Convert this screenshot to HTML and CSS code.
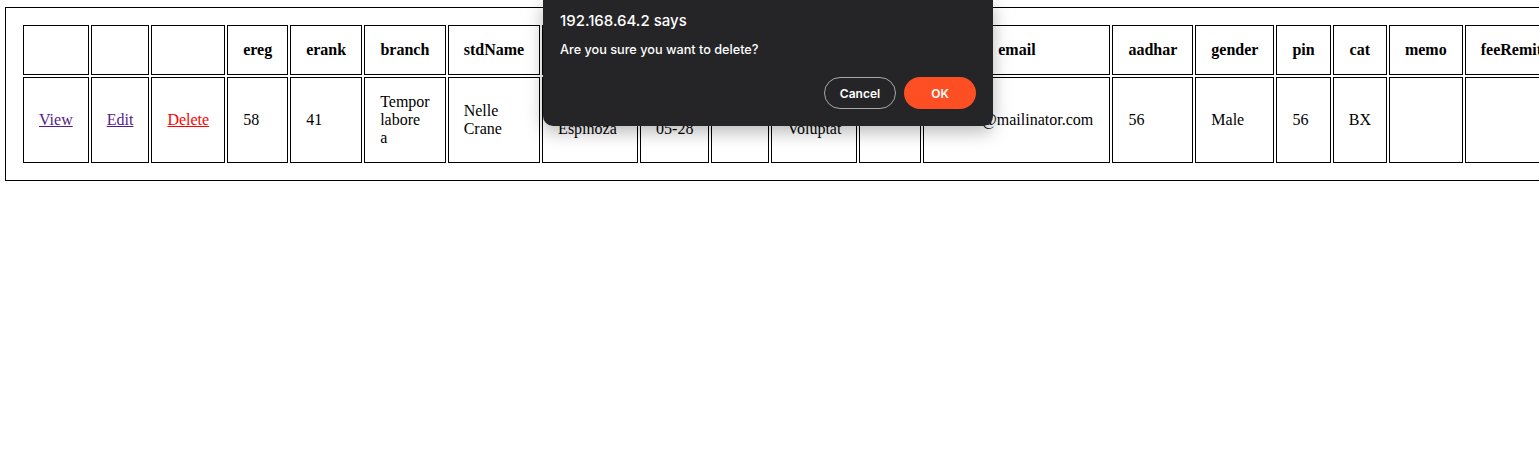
FILE: index.html
```html
<!DOCTYPE html>
<html>
<head>
<meta charset="utf-8">
<title>Students</title>
<link rel="stylesheet" href="styles.css">
</head>
<body>
<div class="wrap">
  <table class="grid">
    <thead>
      <tr>
        <th></th><th></th><th></th>
        <th>ereg</th><th>erank</th><th>branch</th><th>stdName</th>
        <th><div class="col col-lname">lastName</div></th>
        <th><div class="col col-date">date</div></th>
        <th><div class="col col-dob">dob</div></th>
        <th><div class="col col-addr">address</div></th>
        <th><div class="col col-mob">mob</div></th>
        <th><div class="col col-email">email</div></th>
        <th>aadhar</th><th>gender</th><th>pin</th><th>cat</th><th>memo</th><th>feeRemitted</th>
      </tr>
    </thead>
    <tbody>
      <tr>
        <td><a class="visited" href="#">View</a></td>
        <td><a class="visited" href="#">Edit</a></td>
        <td><a class="danger" href="#">Delete</a></td>
        <td>58</td>
        <td>41</td>
        <td>Tempor labore a</td>
        <td>Nelle Crane</td>
        <td>Rhona Espinoza</td>
        <td>1997-<br>05-28</td>
        <td></td>
        <td>Nisi Voluptat</td>
        <td></td>
        <td>haxem@mailinator.com</td>
        <td>56</td>
        <td>Male</td>
        <td>56</td>
        <td>BX</td>
        <td></td>
        <td></td>
      </tr>
    </tbody>
  </table>
</div>

<div class="dialog">
  <div class="dialog-title">192.168.64.2 says</div>
  <div class="dialog-msg">Are you sure you want to delete?</div>
  <div class="dialog-actions">
    <button class="btn btn-cancel">Cancel</button>
    <button class="btn btn-ok">OK</button>
  </div>
</div>
</body>
</html>
```

FILE: styles.css
```css
html {
  overflow: hidden;
}
body {
  margin: 0;
  font-family: "Liberation Serif", "Times New Roman", serif;
  font-size: 16px;
  color: #000;
  background: #fff;
}
.wrap {
  margin: 7px 0 0 5px;
  border: 1px solid #000;
  border-right: none;
  padding: 15px;
}
.grid {
  border-collapse: separate;
  border-spacing: 2px;
}
.grid th,
.grid td {
  border: 1px solid #000;
  padding: 15px;
}
.grid th {
  font-weight: bold;
  text-align: center;
}
.grid td {
  text-align: left;
}
.col { margin: 0 auto; }
.col-lname { width: 64px; }
.col-date { width: 37px; }
.col-dob { width: 26px; }
.col-addr { width: 54px; }
.col-mob { width: 30px; }
.col-email { width: 155px; }

a.visited { color: #551a8b; }
a.danger { color: #ff0000; }

.dialog {
  position: absolute;
  left: 543px;
  top: 0;
  width: 450px;
  height: 126px;
  box-sizing: border-box;
  padding: 12px 17px 16px 17px;
  background: #252527;
  border-radius: 0 0 10px 10px;
  box-shadow: 0 6px 18px rgba(0, 0, 0, 0.28);
  font-family: "Inter", "Noto Sans", sans-serif;
  color: #fff;
}
.dialog-title {
  font-size: 15px;
  line-height: 18px;
  font-weight: 500;
}
.dialog-msg {
  margin-top: 12px;
  font-size: 12.7px;
  line-height: 16px;
  font-weight: 500;
}
.dialog-actions {
  margin-top: 19px;
  display: flex;
  justify-content: flex-end;
  gap: 8px;
}
.btn {
  width: 72px;
  height: 32px;
  border-radius: 16px;
  font-family: "Inter", "Noto Sans", sans-serif;
  font-size: 12px;
  font-weight: 600;
  color: #fff;
  padding: 0;
  cursor: pointer;
}
.btn-cancel {
  background: transparent;
  border: 1px solid #a8a8aa;
}
.btn-ok {
  background: #fd4f23;
  border: none;
}
```
